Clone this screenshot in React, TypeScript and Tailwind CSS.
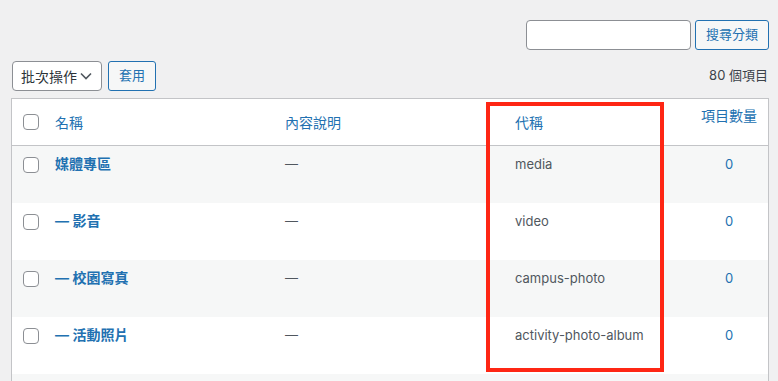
const rows = [
  { name: "媒體專區", slug: "media", count: 0 },
  { name: "— 影音", slug: "video", count: 0 },
  { name: "— 校園寫真", slug: "campus-photo", count: 0 },
  { name: "— 活動照片", slug: "activity-photo-album", count: 0 },
];

function Checkbox() {
  return (
    <span className="block w-4 h-4 rounded-[4px] border border-[#8c8f94] bg-white" />
  );
}

export default function App() {
  return (
    <div className="h-[381px] overflow-hidden bg-[#f0f0f1] pl-[11px] pr-[9px] font-['Inter','Noto_Sans_CJK_TC',sans-serif] text-[13px] text-[#3c434a]">
      {/* Search */}
      <div className="flex justify-end gap-[4px] pt-[20px]">
        <input
          className="w-[165px] h-[30px] rounded-[4px] border border-[#8c8f94] bg-white outline-none"
          type="text"
        />
        <button className="w-[74px] h-[30px] rounded-[3px] border border-[#2271b1] bg-[#f6f7f7] text-[13px] text-[#2271b1]">
          搜尋分類
        </button>
      </div>

      {/* Bulk actions */}
      <div className="mt-[11px] flex items-center justify-between">
        <div className="ml-[1px] flex items-center gap-[6px]">
          <div className="w-[90px] h-[30px] rounded-[4px] border border-[#8c8f94] bg-white flex items-center justify-between pl-[8px] pr-[9px] text-[14px] text-[#2c3338]">
            <span>批次操作</span>
            <svg width="12" height="8" viewBox="0 0 12 8" fill="none">
              <path d="M1 1.5l5 5 5-5" stroke="#50575e" strokeWidth="1.6" />
            </svg>
          </div>
          <button className="w-[48px] h-[30px] rounded-[3px] border border-[#2271b1] bg-[#f6f7f7] text-[13px] text-[#2271b1]">
            套用
          </button>
        </div>
        <span className="mr-[1px] text-[13px] text-[#3c434a]">80 個項目</span>
      </div>

      {/* Table */}
      <div className="relative mt-[7px]">
        <div className="border border-[#c3c4c7] bg-white">
          <div className="grid grid-cols-[33px_230px_230px_185px_1fr] h-[47px] border-b border-[#c3c4c7] text-[14px] text-[#2271b1]">
            <div className="flex items-center pl-[11px]">
              <Checkbox />
            </div>
            <div className="flex items-center pl-[10px]">名稱</div>
            <div className="flex items-center pl-[10px]">內容說明</div>
            <div className="flex items-center pl-[10px]">代稱</div>
            <div className="pt-[7px] leading-[20px] text-center">項目數量</div>
          </div>
          {rows.map((row, i) => (
            <div
              key={row.slug}
              className={
                "grid grid-cols-[33px_230px_230px_185px_1fr] h-[57px] " +
                (i % 2 === 0 ? "bg-[#f6f7f7]" : "bg-white")
              }
            >
              <div className="pl-[11px] pt-[11px]">
                <Checkbox />
              </div>
              <div className="pl-[10px] pt-[8px] leading-[20px] text-[14px] font-semibold text-[#2271b1]">
                {row.name}
              </div>
              <div className="pl-[10px] pt-[8px] leading-[20px] text-[#50575e]">—</div>
              <div className="pl-[10px] pt-[8px] leading-[20px] text-[#50575e]">
                {row.slug}
              </div>
              <div className="pt-[8px] leading-[20px] text-center text-[#2271b1]">
                {row.count}
              </div>
            </div>
          ))}
          {/* next row, scrolled past the bottom edge */}
          <div className="h-[57px] bg-[#f6f7f7]" />
        </div>
        {/* highlight annotation */}
        <div className="absolute left-[475px] top-[4px] w-[178px] h-[270px] border-4 border-[#fe2614] pointer-events-none" />
      </div>
    </div>
  );
}
